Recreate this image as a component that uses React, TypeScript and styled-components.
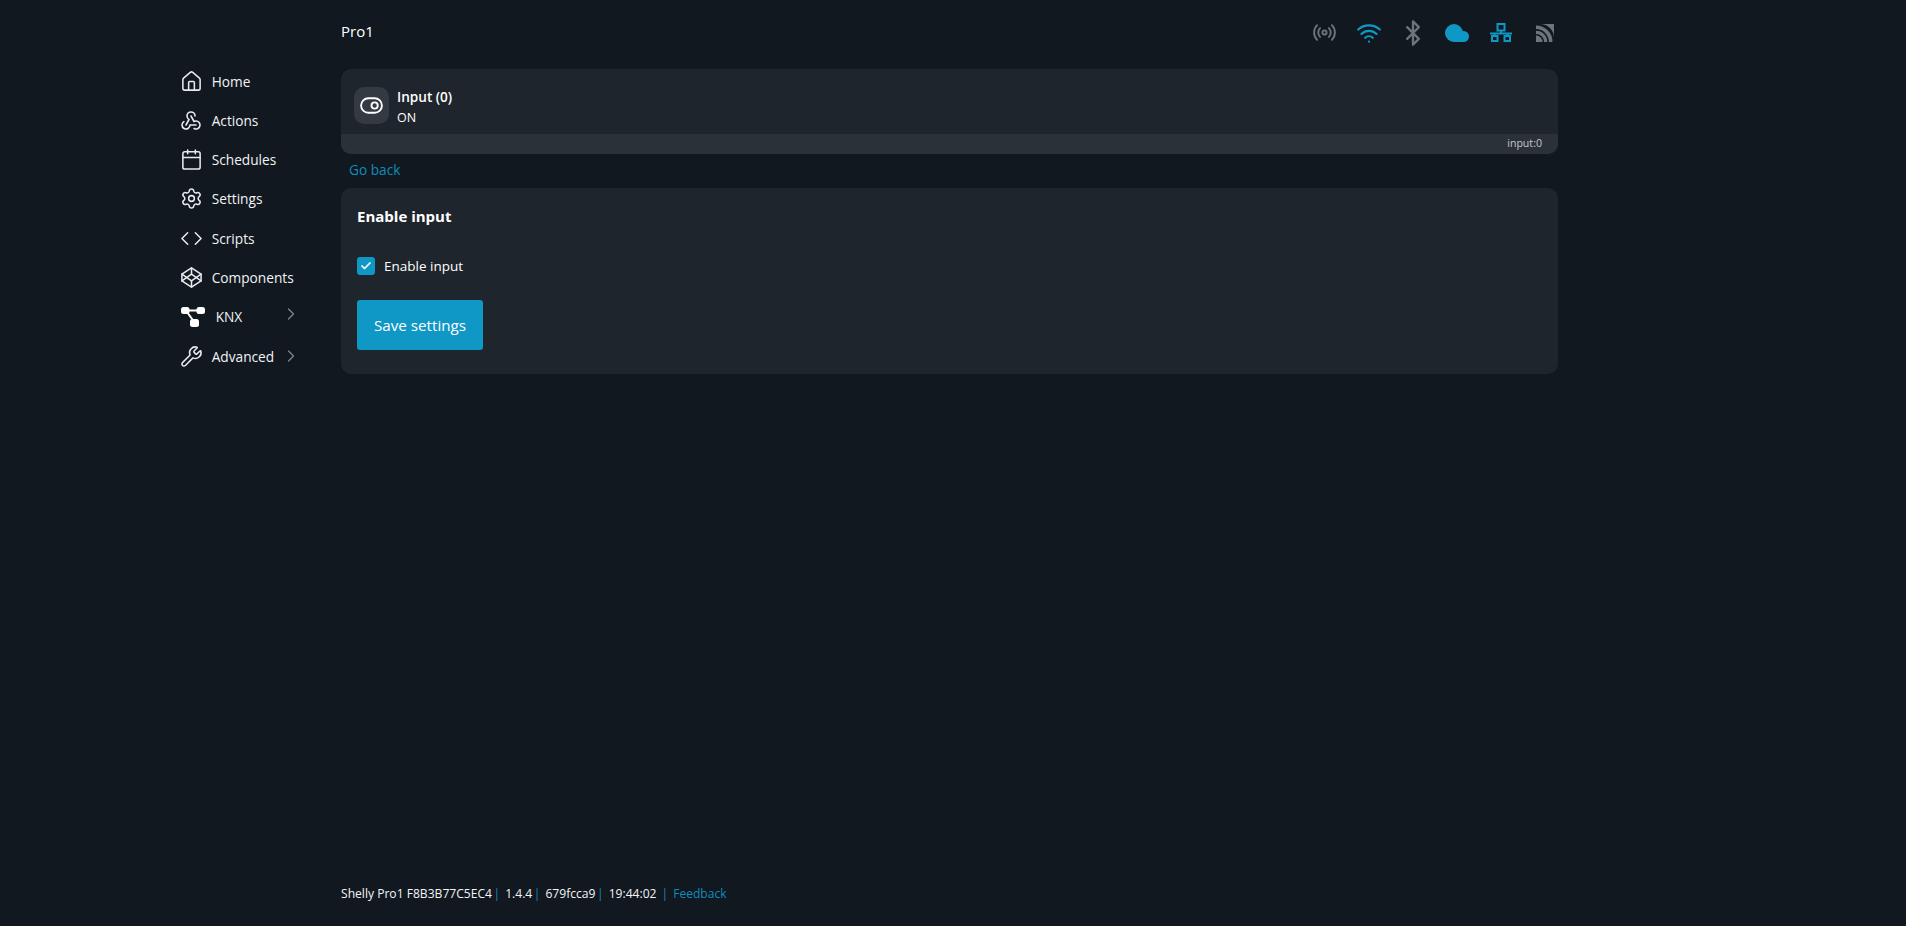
import React from "react";
import styled, { createGlobalStyle } from "styled-components";
import { Home, Calendar, Settings, Code, Codepen, Wrench, ChevronRight, Radio, Wifi, Bluetooth, ToggleRight, Check } from "lucide-react";
import { TbWebhook } from "react-icons/tb";

const Global = createGlobalStyle`
  html, body { margin: 0; padding: 0; background: #111820; }
  body { font-family: "Open Sans", "Noto Sans", sans-serif; color: #fff; font-size: 14px; }
`;
const Page = styled.div`
  height: 926px; box-sizing: border-box; display: grid; grid-template-columns: 341px 1217px; grid-template-rows: 69px 1fr;
`;
const Header = styled.header`
  grid-column: 2; grid-row: 1; display: flex; align-items: center; justify-content: space-between; height: 65px;
`;
const Title = styled.div`font-size: 15px; color: #fff; padding-bottom: 3px;`;
const StatusIcons = styled.div`display: flex; align-items: center; gap: 19px; padding-right: 1px;`;
const StatusIcon = styled.span<{ $on?: boolean }>`
  display: flex; width: 25px; justify-content: center; color: ${p => (p.$on ? "#0f97c6" : "#6d747b")};
  svg { flex: none; }
`;
const Sidebar = styled.nav`
  grid-column: 1; grid-row: 1 / 3; display: flex; flex-direction: column; padding: 61.4px 0 0 179px;
`;
const NavItem = styled.a`
  display: flex; align-items: center; height: 39.3px; font-size: 13.7px; color: #f2f3f4; width: 122px;
`;
const NavIcon = styled.span<{ $wide?: boolean }>`
  display: flex; width: ${p => (p.$wide ? "28px" : "24px")}; margin-right: 8.7px; justify-content: center; color: #e8eaec; flex: none;
  svg { flex: none; }
`;
const NavLabel = styled.span`flex: 1;`;
const Chevron = styled.span<{ $raised?: boolean }>`
  display: flex; flex: none; color: #7e858c; margin-top: ${p => (p.$raised ? "-5px" : "-1px")};
`;
const Main = styled.main`grid-column: 2; grid-row: 2; display: flex; flex-direction: column;`;
const InfoCard = styled.section`
  background: #1e252c; border-radius: 10px; overflow: hidden; height: 85px; display: flex; flex-direction: column;
`;
const InfoRow = styled.div`flex: 1; display: flex; align-items: center; padding: 7px 0 0 13px; gap: 8px;`;
const IconTile = styled.div`
  width: 35px; height: 37px; border-radius: 10px; background: #343a41; display: flex; align-items: center; justify-content: center; color: #fff;
`;
const InfoText = styled.div`padding-top: 3px;`;
const InfoName = styled.div`font-size: 13.6px; font-weight: 600; line-height: 21px;`;
const InfoValue = styled.div`font-size: 12.5px; line-height: 21px;`;
const InfoBar = styled.div`
  height: 20px; background: #2a3138; font-size: 10.6px; color: #c5c8cb; display: flex; align-items: center; justify-content: flex-end; padding: 0 16px 2px 0; box-sizing: border-box;
`;
const BackLink = styled.a`
  color: #0f8cbd; font-size: 13.7px; height: 34px; box-sizing: border-box; display: flex; align-items: center; padding: 0 0 4px 8px;
`;
const FormCard = styled.section`
  background: #1e252c; border-radius: 10px; height: 186px; box-sizing: border-box; padding: 18px 16px; display: flex; flex-direction: column; align-items: flex-start;
`;
const FormTitle = styled.h2`margin: 0; font-size: 15px; font-weight: 700; line-height: 20px;`;
const CheckRow = styled.label`display: flex; align-items: center; gap: 9px; margin-top: 30px; font-size: 13.5px; height: 20px;`;
const CheckBox = styled.span`
  width: 18px; height: 18px; border-radius: 3px; background: #0f97c6; display: flex; align-items: center; justify-content: center;
`;
const SaveButton = styled.button`
  margin-top: 24px; width: 126px; height: 50px; border: 0; border-radius: 3px; background: #0f97c6; color: #fff; font: 15.2px "Open Sans", "Noto Sans", sans-serif;
`;
const Footer = styled.footer`
  margin-top: auto; height: 41px; font-size: 12.1px; color: #f4f5f6; display: flex; align-items: flex-start; line-height: 18px;
`;
const Sep = styled.span`color: #0f8cbd; margin: 0 5px 0 1.5px;`;
const WideSep = styled(Sep)`margin: 0 5px 0 5px;`;
const FootLink = styled.a`color: #0f8cbd;`;

const KnxIcon = () => (
  <svg width="24" height="20" viewBox="0 0 24 20" fill="#fff">
    <rect x="0" y="0" width="8.500" height="7" rx="2.500" />
    <rect x="15.500" y="0" width="8.500" height="7" rx="2.500" />
    <rect x="9" y="12" width="9" height="8" rx="2.500" />
    <path d="M7 3.500h10M6 5l6.500 9" strokeWidth="2" stroke="#fff" fill="none" />
  </svg>
);
const CloudIcon = () => (
  <svg width="24" height="18" viewBox="0 0 24 18" fill="currentColor">
    <circle cx="9" cy="9" r="9" />
    <circle cx="18.500" cy="12.500" r="5.500" />
    <rect x="9" y="11" width="10" height="7" />
  </svg>
);
const NetworkIcon = () => (
  <svg width="22" height="19" viewBox="0 0 22 19" fill="none" stroke="currentColor" strokeWidth="2">
    <rect x="7.500" y="1" width="7" height="6.500" />
    <path d="M11 7.500v4M0 10.500h22M4.500 10.500v3M17.500 10.500v3" />
    <rect x="2" y="13" width="5.500" height="5" />
    <rect x="14.500" y="13" width="5.500" height="5" />
  </svg>
);
const RssIcon = () => (
  <svg width="18" height="18" viewBox="0 0 18 18" fill="none" stroke="currentColor">
    <path d="M0 18V11.500A6.500 6.500 0 0 1 6.500 18Z" fill="currentColor" stroke="none" />
    <path d="M0 8.300A9.700 9.700 0 0 1 9.700 18" strokeWidth="3.200" />
    <path d="M0 3.300A14.700 14.700 0 0 1 14.700 18" strokeWidth="3.600" />
    <path d="M4 0H18V14A14 14 0 0 0 4 0Z" fill="currentColor" stroke="none" />
  </svg>
);

const icon = { size: 23, strokeWidth: 1.6 };
const nav = [
  { label: "Home", icon: <Home {...icon} /> },
  { label: "Actions", icon: <TbWebhook size={24} strokeWidth={1.6} /> },
  { label: "Schedules", icon: <Calendar {...icon} /> },
  { label: "Settings", icon: <Settings {...icon} /> },
  { label: "Scripts", icon: <Code {...icon} /> },
  { label: "Components", icon: <Codepen {...icon} /> },
  { label: "KNX", icon: <KnxIcon />, wide: true, more: true, raised: true },
  { label: "Advanced", icon: <Wrench {...icon} />, more: true },
];

export default function App() {
  return (
    <Page>
      <Global />
      <Header>
        <Title>Pro1</Title>
        <StatusIcons>
          <StatusIcon><Radio size={25} strokeWidth={1.8} /></StatusIcon>
          <StatusIcon $on><Wifi size={26} strokeWidth={2} /></StatusIcon>
          <StatusIcon><Bluetooth size={28} strokeWidth={2} /></StatusIcon>
          <StatusIcon $on><CloudIcon /></StatusIcon>
          <StatusIcon $on><NetworkIcon /></StatusIcon>
          <StatusIcon><RssIcon /></StatusIcon>
        </StatusIcons>
      </Header>
      <Sidebar>
        {nav.map(n => (
          <NavItem key={n.label}>
            <NavIcon $wide={n.wide}>{n.icon}</NavIcon>
            <NavLabel>{n.label}</NavLabel>
            {n.more && <Chevron $raised={n.raised}><ChevronRight size={20} strokeWidth={1.5} /></Chevron>}
          </NavItem>
        ))}
      </Sidebar>
      <Main>
        <InfoCard>
          <InfoRow>
            <IconTile><ToggleRight size={25} strokeWidth={1.8} /></IconTile>
            <InfoText>
              <InfoName>Input (0)</InfoName>
              <InfoValue>ON</InfoValue>
            </InfoText>
          </InfoRow>
          <InfoBar>input:0</InfoBar>
        </InfoCard>
        <BackLink>Go back</BackLink>
        <FormCard>
          <FormTitle>Enable input</FormTitle>
          <CheckRow>
            <CheckBox><Check size={12} strokeWidth={3.5} color="#fff" /></CheckBox>
            Enable input
          </CheckRow>
          <SaveButton>Save settings</SaveButton>
        </FormCard>
        <Footer>
          Shelly Pro1 F8B3B77C5EC4<Sep>|</Sep>1.4.4<Sep>|</Sep>679fcca9<Sep>|</Sep>19:44:02<WideSep>|</WideSep><FootLink>Feedback</FootLink>
        </Footer>
      </Main>
    </Page>
  );
}
